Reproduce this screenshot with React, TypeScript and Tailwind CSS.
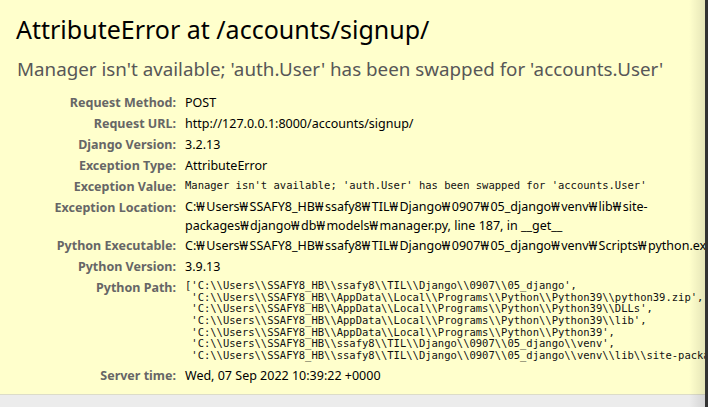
const sans = "font-['Noto_Sans','Noto_Sans_CJK_KR',sans-serif]";

const rows: { label: string; value: string[]; mono?: boolean; h: string }[] = [
  { label: 'Request Method:', value: ['POST'], h: 'h-[21px]' },
  { label: 'Request URL:', value: ['http://127.0.0.1:8000/accounts/signup/'], h: 'h-[21px]' },
  { label: 'Django Version:', value: ['3.2.13'], h: 'h-[21px]' },
  { label: 'Exception Type:', value: ['AttributeError'], h: 'h-[21px]' },
  {
    label: 'Exception Value:',
    value: ["Manager isn't available; 'auth.User' has been swapped for 'accounts.User'"],
    mono: true,
    h: 'h-[21px]',
  },
  {
    label: 'Exception Location:',
    value: [
      'C:₩Users₩SSAFY8_HB₩ssafy8₩TIL₩Django₩0907₩05_django₩venv₩lib₩site-',
      'packages₩django₩db₩models₩manager.py, line 187, in __get__',
    ],
    h: 'h-[38px]',
  },
  {
    label: 'Python Executable:',
    value: ['C:₩Users₩SSAFY8_HB₩ssafy8₩TIL₩Django₩0907₩05_django₩venv₩Scripts₩python.exe'],
    h: 'h-[21px]',
  },
  { label: 'Python Version:', value: ['3.9.13'], h: 'h-[21px]' },
];

const pythonPath = [
  "['C:\\\\Users\\\\SSAFY8_HB\\\\ssafy8\\\\TIL\\\\Django\\\\0907\\\\05_django',",
  " 'C:\\\\Users\\\\SSAFY8_HB\\\\AppData\\\\Local\\\\Programs\\\\Python\\\\Python39\\\\python39.zip',",
  " 'C:\\\\Users\\\\SSAFY8_HB\\\\AppData\\\\Local\\\\Programs\\\\Python\\\\Python39\\\\DLLs',",
  " 'C:\\\\Users\\\\SSAFY8_HB\\\\AppData\\\\Local\\\\Programs\\\\Python\\\\Python39\\\\lib',",
  " 'C:\\\\Users\\\\SSAFY8_HB\\\\AppData\\\\Local\\\\Programs\\\\Python\\\\Python39',",
  " 'C:\\\\Users\\\\SSAFY8_HB\\\\ssafy8\\\\TIL\\\\Django\\\\0907\\\\05_django\\\\venv',",
  " 'C:\\\\Users\\\\SSAFY8_HB\\\\ssafy8\\\\TIL\\\\Django\\\\0907\\\\05_django\\\\venv\\\\lib\\\\site-packages']",
];

const mono = "font-['DejaVu_Sans_Mono',monospace] text-[10.5px] text-[#111]";

// the won sign stands in for the backslash on a Korean Windows font; it's a bit wider there
function WinPath({ text }: { text: string }) {
  const parts = text.split('₩');
  return (
    <>
      {parts.map((p, i) => (
        <span key={i}>
          {p}
          {i < parts.length - 1 && <span className="tracking-[1.6px]">₩</span>}
        </span>
      ))}
    </>
  );
}

export default function App() {
  return (
    <div className={`relative w-[708px] h-[407px] overflow-hidden bg-[#ececec] ${sans}`}>
      <div className="bg-[#ffffcc] border-b border-[#dcdcc8] pt-[13px] pb-[8px] whitespace-nowrap">
        <h1 className="pl-[16px] text-[25px] leading-[32px] text-black">AttributeError at /accounts/signup/</h1>
        <p className="pl-[17px] mt-[11px] text-[18.8px] leading-[26px] text-[#575757]">
          Manager isn't available; 'auth.User' has been swapped for 'accounts.User'
        </p>

        <div className="mt-[10px] flex flex-col">
          {rows.map((r) => (
            <div key={r.label} className={`flex ${r.h}`}>
              <div className="w-[176px] shrink-0 text-right font-bold text-[12.5px] leading-[21px] text-[#666]">
                {r.label}
              </div>
              <div className="pl-[9px]">
                {r.value.map((v, i) => (
                  <div
                    key={i}
                    className={
                      r.mono
                        ? `${mono} leading-[19px]`
                        : `text-[12.5px] ${r.value.length > 1 ? 'leading-[19px]' : 'leading-[21px]'} text-black`
                    }
                  >
                    <WinPath text={v} />
                  </div>
                ))}
              </div>
            </div>
          ))}

          <div className="flex h-[88px]">
            <div className="w-[176px] shrink-0 text-right font-bold text-[12.5px] leading-[21px] text-[#666]">
              Python Path:
            </div>
            <pre className={`pl-[9px] pt-[3px] ${mono} leading-[11.67px]`}>{pythonPath.join('\n')}</pre>
          </div>

          <div className="flex h-[21px]">
            <div className="w-[176px] shrink-0 text-right font-bold text-[12.5px] leading-[21px] text-[#666]">
              Server time:
            </div>
            <div className="pl-[9px] text-[12.5px] leading-[21px] text-black">Wed, 07 Sep 2022 10:39:22 +0000</div>
          </div>
        </div>
      </div>

      <div className="absolute top-0 bottom-0 right-[3px] w-[16px] bg-gradient-to-r from-transparent to-black/10" />
      <div className="absolute top-0 bottom-0 right-0 w-[3px] bg-[#333]" />
    </div>
  );
}
